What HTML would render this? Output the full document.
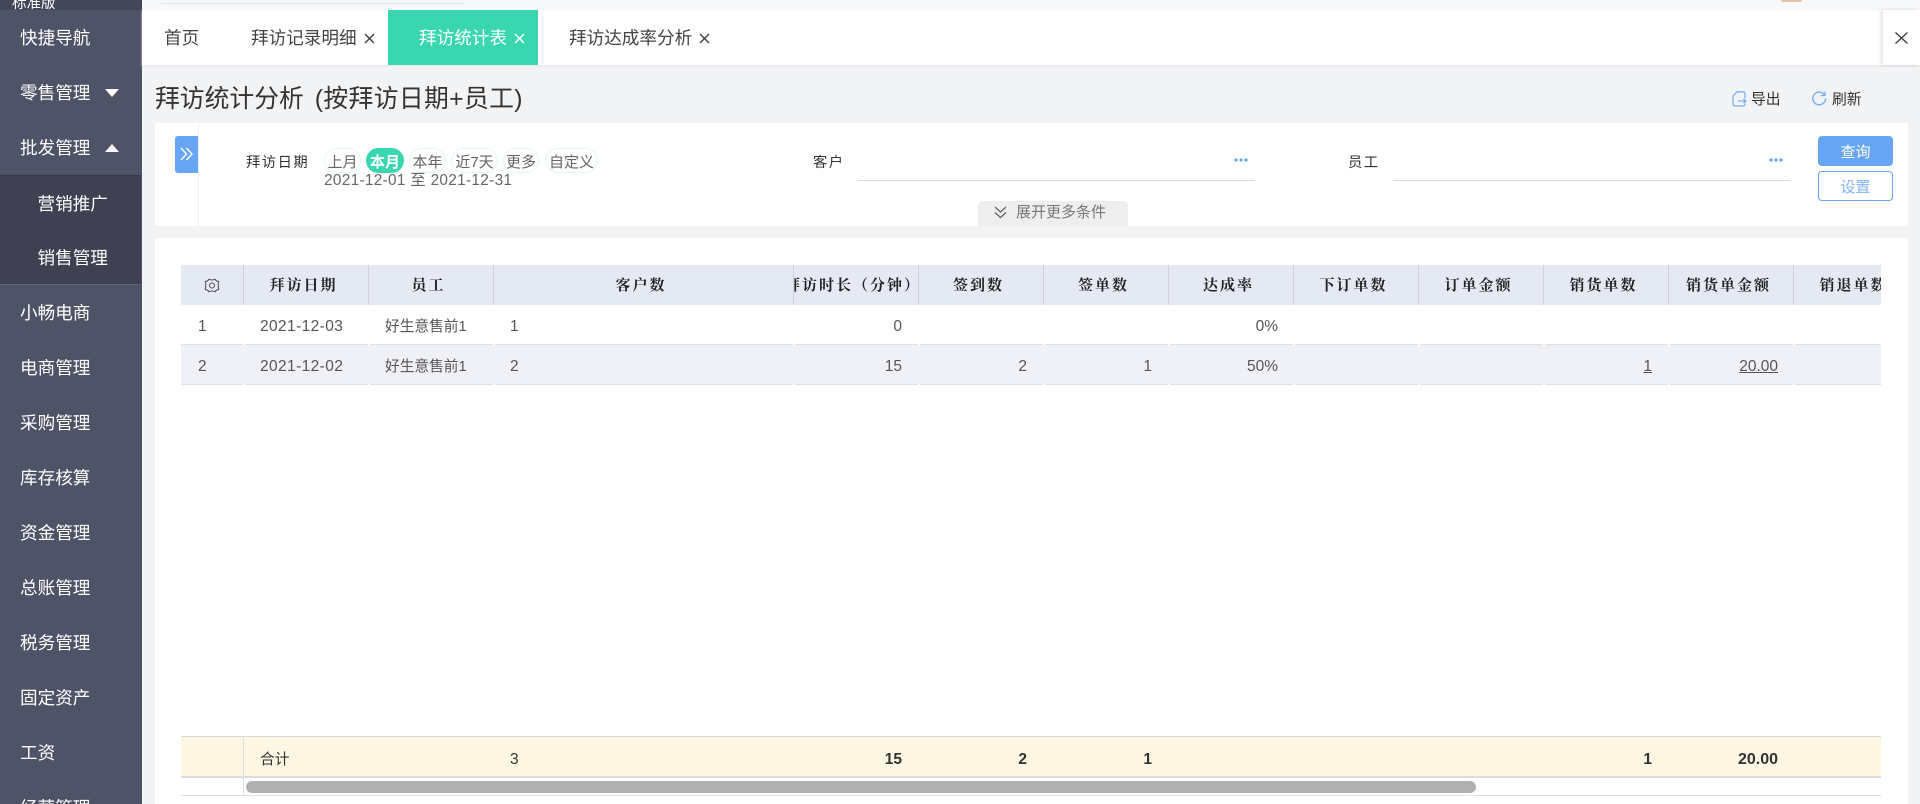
<!DOCTYPE html>
<html lang="zh-CN">
<head>
<meta charset="utf-8">
<title>拜访统计分析</title>
<style>
*{box-sizing:border-box;margin:0;padding:0}
html,body{width:1920px;height:804px;overflow:hidden;background:#f2f3f5;font-family:"Liberation Sans","Noto Sans CJK SC",sans-serif;color:#333}
#app{position:relative;width:1920px;height:804px;overflow:hidden;background:#f2f3f5}
.a{position:absolute}
.t{position:absolute;white-space:nowrap;line-height:20px;height:20px}
.side{font-size:17.6px;color:#fff;left:20px}
.sub{font-size:17.6px;color:#fff;left:37.5px}
.tab{font-size:17.6px;color:#444;top:28px}
.x{position:absolute;top:33px;width:11px;height:11px}
.pill{position:absolute;top:148px;height:25px;border:1px solid #e2f6f1;border-radius:12.5px;font-size:15px;line-height:27px;text-align:center;color:#666;white-space:nowrap}
.lbl{font-size:14.3px;letter-spacing:1.5px;color:#333;top:153px}
.th{position:absolute;top:0;height:40px;border-right:1px solid #cfd2da;text-align:center;padding-right:5px;font:bold 15px/39px "Noto Serif CJK SC","Liberation Serif",serif;letter-spacing:2px;color:#222;white-space:nowrap;overflow:hidden}
.c{position:absolute;white-space:nowrap;font-size:15.5px;line-height:20px;height:20px;color:#555}
.r{text-align:right;width:100px}
.b{font-weight:bold;color:#333}
.d{letter-spacing:.4px}
.n{font-size:14.7px}
</style>
</head>
<body>
<div id="app">
<!-- top bar -->
<div class="a" style="left:0;top:0;width:1920px;height:10px;background:#f7f8fc"></div>
<div class="a" style="left:161px;top:3px;width:304px;height:1px;background:#dfe1e8"></div>
<div class="a" style="left:1781px;top:0;width:21px;height:2px;background:#e9c0a8;border-radius:0 0 6px 6px"></div>

<!-- sidebar -->
<div class="a" style="left:0;top:0;width:142px;height:804px;background:#4f5368"></div>
<div class="a" style="left:0;top:0;width:142px;height:10px;background:#44465a;overflow:hidden"><span class="t" style="left:12px;top:-6px;font-size:14.5px;color:#fff">标准版</span></div>
<div class="a" style="left:0;top:175px;width:141px;height:110px;background:#3f4152;border-top:1px solid #383a49;border-bottom:1px solid #5f6376"></div>
<span class="t side" style="top:28px">快捷导航</span>
<span class="t side" style="top:83px">零售管理</span>
<span class="t side" style="top:138px">批发管理</span>
<span class="t sub" style="top:194px">营销推广</span>
<span class="t sub" style="top:248px">销售管理</span>
<span class="t side" style="top:303px">小畅电商</span>
<span class="t side" style="top:358px">电商管理</span>
<span class="t side" style="top:413px">采购管理</span>
<span class="t side" style="top:468px">库存核算</span>
<span class="t side" style="top:523px">资金管理</span>
<span class="t side" style="top:578px">总账管理</span>
<span class="t side" style="top:633px">税务管理</span>
<span class="t side" style="top:688px">固定资产</span>
<span class="t side" style="top:743px">工资</span>
<span class="t side" style="top:798px">经营管理</span>
<svg class="a" style="left:105px;top:89px" width="14" height="8"><path d="M0 0H14L7 8Z" fill="#fff"/></svg>
<svg class="a" style="left:105px;top:144px" width="14" height="8"><path d="M0 8H14L7 0Z" fill="#fff"/></svg>

<!-- tabs -->
<div class="a" style="left:142px;top:10px;width:1778px;height:55px;background:#fff;box-shadow:0 1px 2px #e6e7ea"></div>
<div class="a" style="left:388px;top:10px;width:150px;height:55px;background:#3ad6b0"></div>
<span class="t tab" style="left:164px;color:#444">首页</span>
<span class="t tab" style="left:251px">拜访记录明细</span>
<svg class="x" style="left:364px"><path d="M1 1L10 10M10 1L1 10" stroke="#444" stroke-width="1.5"/></svg>
<span class="t tab" style="left:419px;color:#fff">拜访统计表</span>
<svg class="x" style="left:514px"><path d="M1 1L10 10M10 1L1 10" stroke="#fff" stroke-width="1.5"/></svg>
<span class="t tab" style="left:569px">拜访达成率分析</span>
<svg class="x" style="left:699px"><path d="M1 1L10 10M10 1L1 10" stroke="#444" stroke-width="1.5"/></svg>
<div class="a" style="left:1883px;top:10px;width:37px;height:55px;background:#fff;box-shadow:-2px 0 4px rgba(0,0,0,.12)"></div>
<svg class="a" style="left:1895px;top:32px" width="13" height="12"><path d="M.5 .5L12.5 11.5M12.5 .5L.5 11.5" stroke="#333" stroke-width="1.2"/></svg>

<!-- title -->
<span class="t" style="left:155px;top:90px;font-size:24.8px;color:#333">拜访统计分析<span style="letter-spacing:.35px;margin-left:11px">(按拜访日期+员工)</span></span>
<svg class="a" style="left:1732px;top:91px" width="15" height="16" fill="none" stroke="#7aaef5" stroke-width="1.3"><path d="M1 13V5L5 .8H11Q13 .8 13 3V7M13 12.5V13Q13 15 11 15H3Q1 15 1 13"/><path d="M6 10H14M11.5 7.8L14 10L11.5 12.2"/></svg>
<span class="t" style="left:1751px;top:90px;font-size:14.8px;color:#333">导出</span>
<svg class="a" style="left:1811px;top:90px" width="16" height="16" fill="none" stroke="#7aaef5" stroke-width="1.4"><path d="M13.6 5A6.4 6.4 0 1 0 14.6 8.5"/><path d="M14 1.5V5.5H10" stroke-width="1.2"/></svg>
<span class="t" style="left:1832px;top:90px;font-size:14.8px;color:#333">刷新</span>

<!-- filter panel -->
<div class="a" style="left:155px;top:123px;width:1753px;height:103px;background:#fff"></div>
<div class="a" style="left:198px;top:123px;width:1px;height:103px;background:#eef0f3"></div>
<div class="a" style="left:175px;top:136px;width:23px;height:37px;background:#66a6f5;border-radius:3px 0 0 3px"></div>
<svg class="a" style="left:180px;top:147px" width="13" height="14" fill="none" stroke="#fff" stroke-width="1.4"><path d="M1 1L6.5 7L1 13M6.5 1L12 7L6.5 13"/></svg>
<span class="t lbl" style="left:246px">拜访日期</span>
<div class="pill" style="left:324px;width:37px">上月</div>
<div class="pill" style="left:366px;width:38px;background:#3ad6b0;border-color:#3ad6b0;color:#fff;font-weight:bold">本月</div>
<div class="pill" style="left:409px;width:37px">本年</div>
<div class="pill" style="left:451px;width:47px">近7天</div>
<div class="pill" style="left:503px;width:36px">更多</div>
<div class="pill" style="left:545px;width:53px">自定义</div>
<span class="t" style="left:324px;top:171px;font-size:15.4px;letter-spacing:.3px;color:#666">2021-12-01 至 2021-12-31</span>

<span class="t lbl" style="left:813px">客户</span>
<div class="a" style="left:858px;top:180px;width:397px;height:1px;background:#dcdcdc"></div>
<svg class="a" style="left:1234px;top:158px" width="14" height="4" fill="#66a6f5"><circle cx="2" cy="2" r="1.6"/><circle cx="7" cy="2" r="1.6"/><circle cx="12" cy="2" r="1.6"/></svg>
<span class="t lbl" style="left:1348px">员工</span>
<div class="a" style="left:1393px;top:180px;width:397px;height:1px;background:#dcdcdc"></div>
<svg class="a" style="left:1769px;top:158px" width="14" height="4" fill="#66a6f5"><circle cx="2" cy="2" r="1.6"/><circle cx="7" cy="2" r="1.6"/><circle cx="12" cy="2" r="1.6"/></svg>
<div class="a" style="left:1818px;top:136px;width:75px;height:30px;background:#66a6f5;border-radius:4px;color:#fff;font-size:15px;line-height:33px;text-align:center">查询</div>
<div class="a" style="left:1818px;top:171px;width:75px;height:30px;border:1px solid #66a6f5;border-radius:4px;color:#82b4f5;font-size:15px;line-height:32px;text-align:center;background:#fff">设置</div>
<div class="a" style="left:978px;top:201px;width:150px;height:25px;background:#eeeeee;border-radius:5px 5px 0 0"></div>
<svg class="a" style="left:994px;top:206px" width="13" height="13" fill="none" stroke="#666" stroke-width="1.3"><path d="M1 1L6.5 6L12 1M1 6.5L6.5 11.5L12 6.5"/></svg>
<span class="t" style="left:1016px;top:203px;font-size:15px;color:#777">展开更多条件</span>

<!-- table panel -->
<div class="a" style="left:155px;top:238px;width:1753px;height:566px;background:#fff"></div>
<div class="a" style="left:181px;top:265px;width:1700px;height:40px;background:#e5e9f4;overflow:hidden">
  <div class="th" style="left:0;width:63px"></div>
  <div class="th" style="left:63px;width:125px">拜访日期</div>
  <div class="th" style="left:188px;width:125px">员工</div>
  <div class="th" style="left:313px;width:300px">客户数</div>
  <div class="th" style="left:613px;width:125px"><span style="position:absolute;right:-3px;top:0">拜访时长（分钟）</span></div>
  <div class="th" style="left:738px;width:125px">签到数</div>
  <div class="th" style="left:863px;width:125px">签单数</div>
  <div class="th" style="left:988px;width:125px">达成率</div>
  <div class="th" style="left:1113px;width:125px">下订单数</div>
  <div class="th" style="left:1238px;width:125px">订单金额</div>
  <div class="th" style="left:1363px;width:125px">销货单数</div>
  <div class="th" style="left:1488px;width:125px">销货单金额</div>
  <div class="th" style="left:1613px;width:125px;overflow:visible">销退单数</div>
</div>
<svg class="a" style="left:204px;top:278px" width="16" height="15" viewBox="0 0 16 15" fill="none" stroke="#555" stroke-width="1.1" stroke-linejoin="round"><path d="M5 1.2Q8 2.8 11 1.2Q12.2 3.4 14.8 3.6Q13.6 7.5 14.8 11.4Q12.2 11.6 11 13.8Q8 12.2 5 13.8Q3.8 11.6 1.2 11.4Q2.4 7.5 1.2 3.6Q3.8 3.4 5 1.2Z"/><circle cx="8" cy="7.5" r="2.5"/></svg>

<div class="a" style="left:181px;top:345px;width:1700px;height:39px;background:#f0f1f7"></div>
<svg class="a" style="left:181px;top:344px" width="1700" height="41" stroke="#dfe1e6" stroke-width="1" fill="none"><path d="M0 .5H62M64 .5H187M189 .5H312M314 .5H612M614 .5H737M739 .5H862M864 .5H987M989 .5H1112M1114 .5H1237M1239 .5H1362M1364 .5H1487M1489 .5H1612M1614 .5H1700M0 40.5H62M64 40.5H187M189 40.5H312M314 40.5H612M614 40.5H737M739 40.5H862M864 40.5H987M989 40.5H1112M1114 40.5H1237M1239 40.5H1362M1364 40.5H1487M1489 40.5H1612M1614 40.5H1700"/></svg>

<span class="c" style="left:198px;top:317px">1</span>
<span class="c d" style="left:260px;top:317px">2021-12-03</span>
<span class="c n" style="left:385px;top:317px">好生意售前1</span>
<span class="c" style="left:510px;top:317px">1</span>
<span class="c r" style="left:802px;top:317px">0</span>
<span class="c r" style="left:1178px;top:317px">0%</span>

<span class="c" style="left:198px;top:357px">2</span>
<span class="c d" style="left:260px;top:357px">2021-12-02</span>
<span class="c n" style="left:385px;top:357px">好生意售前1</span>
<span class="c" style="left:510px;top:357px">2</span>
<span class="c r" style="left:802px;top:357px">15</span>
<span class="c r" style="left:927px;top:357px">2</span>
<span class="c r" style="left:1052px;top:357px">1</span>
<span class="c r" style="left:1178px;top:357px">50%</span>
<span class="c r" style="left:1552px;top:357px;text-decoration:underline">1</span>
<span class="c r" style="left:1678px;top:357px;text-decoration:underline">20.00</span>

<!-- footer -->
<div class="a" style="left:181px;top:736px;width:1700px;height:42px;background:#fdf6e3;border-top:1px solid #d8d8d8;border-bottom:2px solid #dcdcdc"></div>
<div class="a" style="left:243px;top:736px;width:1px;height:60px;background:#dfdfdf"></div>
<span class="c n" style="left:260px;top:750px;color:#333">合计</span>
<span class="c" style="left:510px;top:750px;color:#333">3</span>
<span class="c r b" style="left:802px;top:750px">15</span>
<span class="c r b" style="left:927px;top:750px">2</span>
<span class="c r b" style="left:1052px;top:750px">1</span>
<span class="c r b" style="left:1552px;top:750px">1</span>
<span class="c r b" style="left:1678px;top:750px;font-size:16px">20.00</span>
<div class="a" style="left:246px;top:781px;width:1230px;height:12px;background:#b0b0b0;border-radius:6px"></div>
<div class="a" style="left:181px;top:795px;width:1700px;height:1px;background:#e0e0e0"></div>
</div>
</body>
</html>
